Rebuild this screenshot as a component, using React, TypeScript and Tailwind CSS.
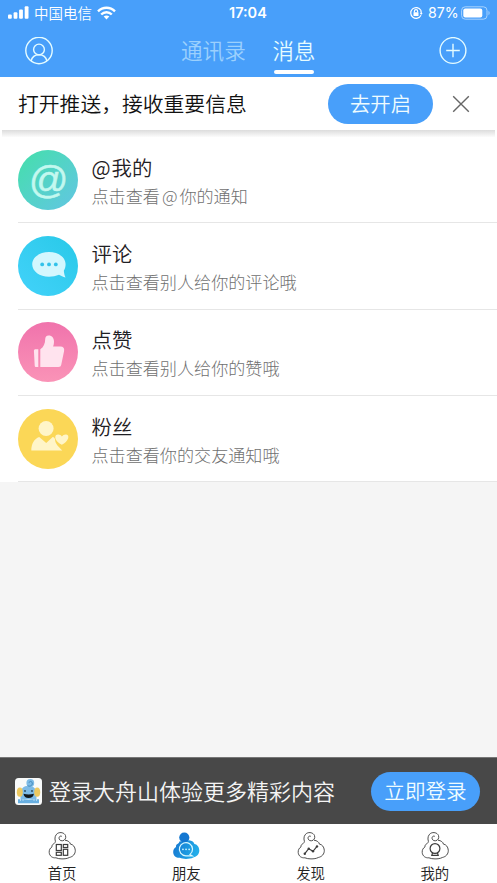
import type { ReactNode } from "react";
import clsx from "clsx";

const BODY_PATH =
  "M7.4 9.4C7.2 10.6 6.6 11.4 5.4 12C4.2 12.7 3.9 13.7 4 14.9C2.1 16 1 18 1.2 20.5C1.5 24.1 4.5 26.2 7.9 25.8C9.5 26.5 11.7 26.9 14 26.9C16.7 26.9 19.3 26.6 21.3 25.5C25 24.7 27.4 22 27.3 18.3C27.1 14.9 25 12.4 22.4 12.1C22.2 10.2 19.9 8.5 17 8.2";

const CURL_PATH =
  "M7.4 9.4C6.3 6.2 7.2 2.8 9.7 1.3C12.4 -0.2 16.3 0.7 17.5 3.5C18.4 6 17 8.6 14.3 8.8C12.1 8.9 10.7 7.3 11.1 5.5C11.4 4.3 12.7 3.7 13.8 4.3";

const StatusBar = () => (
  <div className="flex h-[25px] items-center pr-[5px] pl-2 text-white">
    <svg width="21" height="13" viewBox="0 0 21 13" fill="currentColor">
      <rect x="0" y="8.5" width="3.8" height="4.2" rx="1" />
      <rect x="5.6" y="6.3" width="3.8" height="6.4" rx="1" />
      <rect x="11.1" y="3.6" width="3.8" height="9.1" rx="1" />
      <rect x="16.7" y="0.3" width="3.8" height="12.4" rx="1" />
    </svg>
    <span className="ml-[5px] w-[58px] text-[14.5px] font-[350] whitespace-nowrap">中国电信</span>
    <svg className="ml-[5px]" width="19" height="14" viewBox="0 0 19 14" fill="none" stroke="currentColor" strokeWidth="2.4">
      <path d="M1 5.3C5.8 0.6 13.2 0.6 18 5.3" />
      <path d="M4.2 8.5C7.2 5.5 11.8 5.5 14.8 8.5" />
      <path d="M6.7 10.6C8.3 9.1 10.7 9.1 12.3 10.6L9.5 13.5Z" fill="currentColor" stroke="none" />
    </svg>
    <span className="ml-[113px] w-[42px] font-[Inter,sans-serif] text-[14.5px] font-semibold">17:04</span>
    <svg className="ml-[138px]" width="14" height="14" viewBox="0 0 14 14" fill="none" stroke="currentColor" strokeWidth="1.2">
      <path d="M11.8 4.2A5.4 5.4 0 1 0 12 9.3" />
      <path d="M10.8 7H13.6L12.2 8.9Z" fill="currentColor" stroke="none" />
      <path d="M11.8 4.2L12.3 7" />
      <rect x="4.5" y="6.2" width="5" height="3.8" rx="0.6" fill="currentColor" stroke="none" />
      <path d="M5.4 6.4V5.2A1.6 1.6 0 0 1 8.6 5.2V6.4" />
    </svg>
    <span className="ml-[5px] w-[31px] font-[Inter,sans-serif] text-[14.2px] whitespace-nowrap">87%</span>
    <svg className="ml-[2px]" width="30" height="14" viewBox="0 0 30 14" fill="none">
      <rect x="0.6" y="0.8" width="25.4" height="12.4" rx="3.6" stroke="#a9d3fd" />
      <rect x="2.3" y="2.5" width="19" height="9" rx="2" fill="white" />
      <path d="M27.5 4.8C29 5.5 29 8.5 27.5 9.2Z" fill="#a9d3fd" />
    </svg>
  </div>
);

const Header = () => (
  <header className="h-[77px] bg-[#489ffa]">
    <StatusBar />
    <div className="flex h-[52px] items-center text-[#e5fcff]">
      <svg className="ml-[25px]" width="28" height="28" viewBox="0 0 28 28" fill="none" stroke="currentColor" strokeWidth="1.4">
        <circle cx="14" cy="13.5" r="13.2" />
        <circle cx="14" cy="12.5" r="5.4" />
        <path d="M6.2 23.9C7 19.7 9.5 17.7 14 17.7S21 19.7 21.8 23.9" />
      </svg>
      <span className="ml-[128px] h-[45px] w-[66px] text-[21.6px] leading-[42px] font-[350] whitespace-nowrap text-[#9bd0fd]">
        通讯录
      </span>
      <div className="ml-[26px] flex h-[52px] w-[42px] flex-col items-center">
        <span className="h-[45px] text-[21.4px] leading-[49px] font-[350] whitespace-nowrap">消息</span>
        <span className="h-[3.5px] w-10 rounded-full bg-white" />
      </div>
      <svg className="ml-[124px]" width="28" height="28" viewBox="0 0 28 28" fill="none" stroke="currentColor" strokeWidth="1.4">
        <circle cx="14" cy="13.5" r="12.9" />
        <path d="M14 6.7V20.3M7.2 13.5H20.8" />
      </svg>
    </div>
  </header>
);

const PushBar = () => (
  <div className="bg-white">
    <div className="flex h-[53px] items-center pl-[18px]">
      <span className="w-[310px] text-[20.8px] font-[350] whitespace-nowrap text-[#111]">打开推送，接收重要信息</span>
      <button className="h-10 w-[105px] rounded-full bg-[#489ffa] text-[20.4px] font-[350] text-[#effcff]">去开启</button>
      <svg className="ml-[19px]" width="18" height="18" viewBox="0 0 18 18" fill="none" stroke="#666" strokeWidth="1.4">
        <path d="M1.2 1.2L16.8 16.8M16.8 1.2L1.2 16.8" />
      </svg>
    </div>
    <div className="mx-[2px] h-[7px] bg-linear-to-b from-[#dcdcdc] to-[#fcfcfc]" />
  </div>
);

const CommentIcon = () => (
  <svg width="60" height="60" viewBox="0 0 60 60">
    <path
      d="M31 16C21.6 16 14.2 21.3 14.2 28.3S21.6 40.8 31 40.8C34.5 40.8 38 40.1 41 38.8C43 40 45 41 47.5 41.5C46.6 39.6 46.2 37.6 45.8 34.8C47 32.8 47.6 30.7 47.6 28.3C47.6 21.3 40.4 16 31 16Z"
      fill="#d3f7fe"
    />
    <g fill="#31c2ea">
      <circle cx="24.2" cy="28.4" r="1.9" />
      <circle cx="31" cy="28.4" r="1.9" />
      <circle cx="37.8" cy="28.4" r="1.9" />
    </g>
  </svg>
);

const LikeIcon = () => (
  <svg width="60" height="60" viewBox="0 0 60 60" fill="#ffe3ee">
    <path d="M20.3 27.2H17.5C16.6 27.2 15.9 27.9 15.9 28.8L16.7 43.4C16.7 44.3 17.4 45 18.3 45H20.3Z" />
    <path d="M22.3 27.2C25.6 25.2 27.2 21.7 27.2 17.3C27.2 14.9 28.4 13.5 30.6 13.5C34.2 13.5 36 16.2 36 19.7C36 21.4 35.7 23 35.1 24.5H42.4C45.3 24.5 46.6 26.3 46.1 28.9L43.3 42.5C43 44.2 42.1 45 40.4 45H22.3Z" />
  </svg>
);

const FansIcon = () => (
  <svg width="60" height="60" viewBox="0 0 60 60" fill="#fff5c8">
    <circle cx="28.1" cy="19.5" r="7.5" />
    <path d="M13.3 42C13.3 34.5 16.2 30 21.2 28L28.2 34L34.7 28C36 28.3 36.8 29 37 30.2C37 34.5 40.2 37.2 44.3 41.5H13.3Z" />
    <path d="M43.8 35.8C40 33.7 37.6 31.2 37.3 29C37 26.7 38.3 25.5 40.3 25.6C41.8 25.7 43 26.4 43.8 27.4C45 26.3 46.5 25.3 48.3 25.6C50.2 25.9 50.8 27.6 50.1 29.6C49.2 32.1 47 34.3 43.8 35.8Z" />
  </svg>
);

interface MessageItem {
  title: ReactNode;
  hint: ReactNode;
  color: string;
  icon: ReactNode;
}

const items: MessageItem[] = [
  {
    title: (
      <>
        <span className="mr-[1px]">@</span>我的
      </>
    ),
    hint: (
      <>
        点击查看<span className="mx-[2px]">@</span>你的通知
      </>
    ),
    color: "bg-linear-to-br from-[#43dfa9] to-[#62c5e3]",
    icon: (
      <span className="font-['Liberation_Sans',sans-serif] text-[39px] leading-[56px] text-[#c3f8ef] italic [-webkit-text-stroke:0.5px_#c3f8ef]">
        @
      </span>
    ),
  },
  {
    title: "评论",
    hint: "点击查看别人给你的评论哦",
    color: "bg-linear-to-tr from-[#42d2fa] to-[#27c9e8]",
    icon: <CommentIcon />,
  },
  {
    title: "点赞",
    hint: "点击查看别人给你的赞哦",
    color: "bg-linear-to-b from-[#f073ac] to-[#fa93b7]",
    icon: <LikeIcon />,
  },
  {
    title: "粉丝",
    hint: "点击查看你的交友通知哦",
    color: "bg-[#fbd757]",
    icon: <FansIcon />,
  },
];

const MessageRow = ({ item }: { item: MessageItem }) => (
  <li className="ml-[18px] flex h-[86.3px] items-center border-b border-[#e6e6e6]">
    <div className={clsx("flex size-[60px] shrink-0 items-center justify-center rounded-full", item.color)}>
      {item.icon}
    </div>
    <div className="ml-[13.5px] pt-[2px] whitespace-nowrap">
      <p className="text-[20.4px] leading-[30px] font-[350] text-[#1f2024]">{item.title}</p>
      <p className="text-[17.1px] leading-7 font-light text-[#707070]">{item.hint}</p>
    </div>
  </li>
);

const Mascot = () => (
  <svg className="shrink-0" width="27" height="27" viewBox="0 0 27 27">
    <rect width="27" height="27" rx="3.5" fill="#f8fafa" />
    <path d="M5.5 15.5C5.5 11 8.5 7.8 13.5 7.8S21.5 11 21.5 15.5V21.5H5.5Z" fill="#7dbbe6" />
    <circle cx="15.3" cy="4.9" r="3.9" fill="#7dbbe6" />
    <path d="M12.6 7.5C14.3 8.9 17.5 8 17.3 5.1C17 3 14.3 2.9 14.1 4.7" fill="none" stroke="#377eae" strokeWidth="0.8" />
    <ellipse cx="4.8" cy="14.2" rx="3" ry="4.6" fill="#edc960" />
    <ellipse cx="22.2" cy="14.2" rx="3" ry="4.6" fill="#edc960" />
    <circle cx="10" cy="13" r="0.9" fill="#294659" />
    <circle cx="17" cy="13" r="0.9" fill="#294659" />
    <path d="M8.5 15.8C11.5 16.8 15.8 16.8 18.9 15.8C18.7 18.6 16.5 20 13.6 20S8.8 18.6 8.5 15.8Z" fill="#12191d" />
    <path d="M3 21.3H8L13.5 22L19 21.3H24V25.3H3Z" fill="#67aee0" />
    <path d="M5.5 21V23M8 21V23M19 21V23M21.5 21V23" stroke="#d1ecf8" strokeWidth="0.7" />
  </svg>
);

const LoginBar = () => (
  <div className="flex h-[67px] items-center border-t border-[#777] bg-[#484848] pl-[15px]">
    <Mascot />
    <span className="-mt-[2px] ml-[7px] w-[322px] text-[22px] font-[350] whitespace-nowrap text-[#f4f4f4]">
      登录大舟山体验更多精彩内容
    </span>
    <button className="h-[39px] w-[109px] rounded-full bg-[#489ffa] pb-px text-[20.6px] font-[350] whitespace-nowrap text-[#effcff]">
      立即登录
    </button>
  </div>
);

interface NavTab {
  label: string;
  glyph: ReactNode;
  active?: boolean;
}

const tabs: NavTab[] = [
  {
    label: "首页",
    glyph: (
      <>
        <rect x="8.3" y="12.5" width="5" height="6" />
        <rect x="15.3" y="12.5" width="4.4" height="3" />
        <rect x="8.3" y="20.3" width="5" height="3" />
        <rect x="15.3" y="17.3" width="4.4" height="6" />
      </>
    ),
  },
  {
    label: "朋友",
    active: true,
    glyph: (
      <>
        <path d="M18 22.4A6.6 6.6 0 1 0 14 23.8H20.2L18 22.4Z" />
        <path d="M10.9 17.4H11M14 17.4H14.1M17.1 17.4H17.2" strokeWidth="1.6" strokeLinecap="round" />
      </>
    ),
  },
  {
    label: "发现",
    glyph: (
      <>
        <path d="M7.8 21.7L11.7 16.7L16 19.3L20 14.4" />
        <g fill="currentColor" stroke="none">
          <circle cx="7.8" cy="21.7" r="1.2" />
          <circle cx="11.7" cy="16.7" r="1.2" />
          <circle cx="16" cy="19.3" r="1.2" />
          <circle cx="20" cy="14.4" r="1.2" />
        </g>
      </>
    ),
  },
  {
    label: "我的",
    glyph: (
      <>
        <circle cx="14" cy="16.5" r="4.9" />
        <path d="M11.5 21L10.8 23.4H17.2L16.5 21" />
      </>
    ),
  },
];

const NavIcon = ({ tab }: { tab: NavTab }) => {
  if (tab.active) {
    return (
      <svg width="28" height="28" viewBox="0 0 28 28" fill="none">
        <defs>
          <linearGradient id="nav-active" x1="0" y1="0" x2="1" y2="0.3">
            <stop stopColor="#1674cf" />
            <stop offset="1" stopColor="#21ace9" />
          </linearGradient>
        </defs>
        <path d={`${BODY_PATH}Z`} fill="url(#nav-active)" />
        <circle cx="12.3" cy="5.5" r="5.1" fill="#1477d1" />
        <g stroke="#d8f8ff" strokeWidth="1.2">{tab.glyph}</g>
      </svg>
    );
  }

  return (
    <svg className="text-[#3c3c3c]" width="28" height="28" viewBox="0 0 28 28" fill="none" stroke="currentColor">
      <path d={BODY_PATH} strokeWidth="0.9" />
      <path d={CURL_PATH} strokeWidth="0.9" />
      <g strokeWidth="1.2">{tab.glyph}</g>
    </svg>
  );
};

export default function App() {
  return (
    <div className="flex h-[883px] w-[497px] flex-col overflow-hidden bg-[#f5f5f5] font-['Noto_Sans_CJK_SC',sans-serif]">
      <Header />
      <PushBar />
      <ul className="bg-white">
        {items.map((item, index) => (
          <MessageRow key={index} item={item} />
        ))}
      </ul>
      <div className="flex-1" />
      <LoginBar />
      <nav className="grid h-[59px] grid-cols-4 bg-white">
        {tabs.map((tab) => (
          <div key={tab.label} className="flex flex-col items-center pt-2">
            <NavIcon tab={tab} />
            <span className="mt-[2px] text-[14.4px] leading-[21px] font-[350] text-[#222]">{tab.label}</span>
          </div>
        ))}
      </nav>
    </div>
  );
}
